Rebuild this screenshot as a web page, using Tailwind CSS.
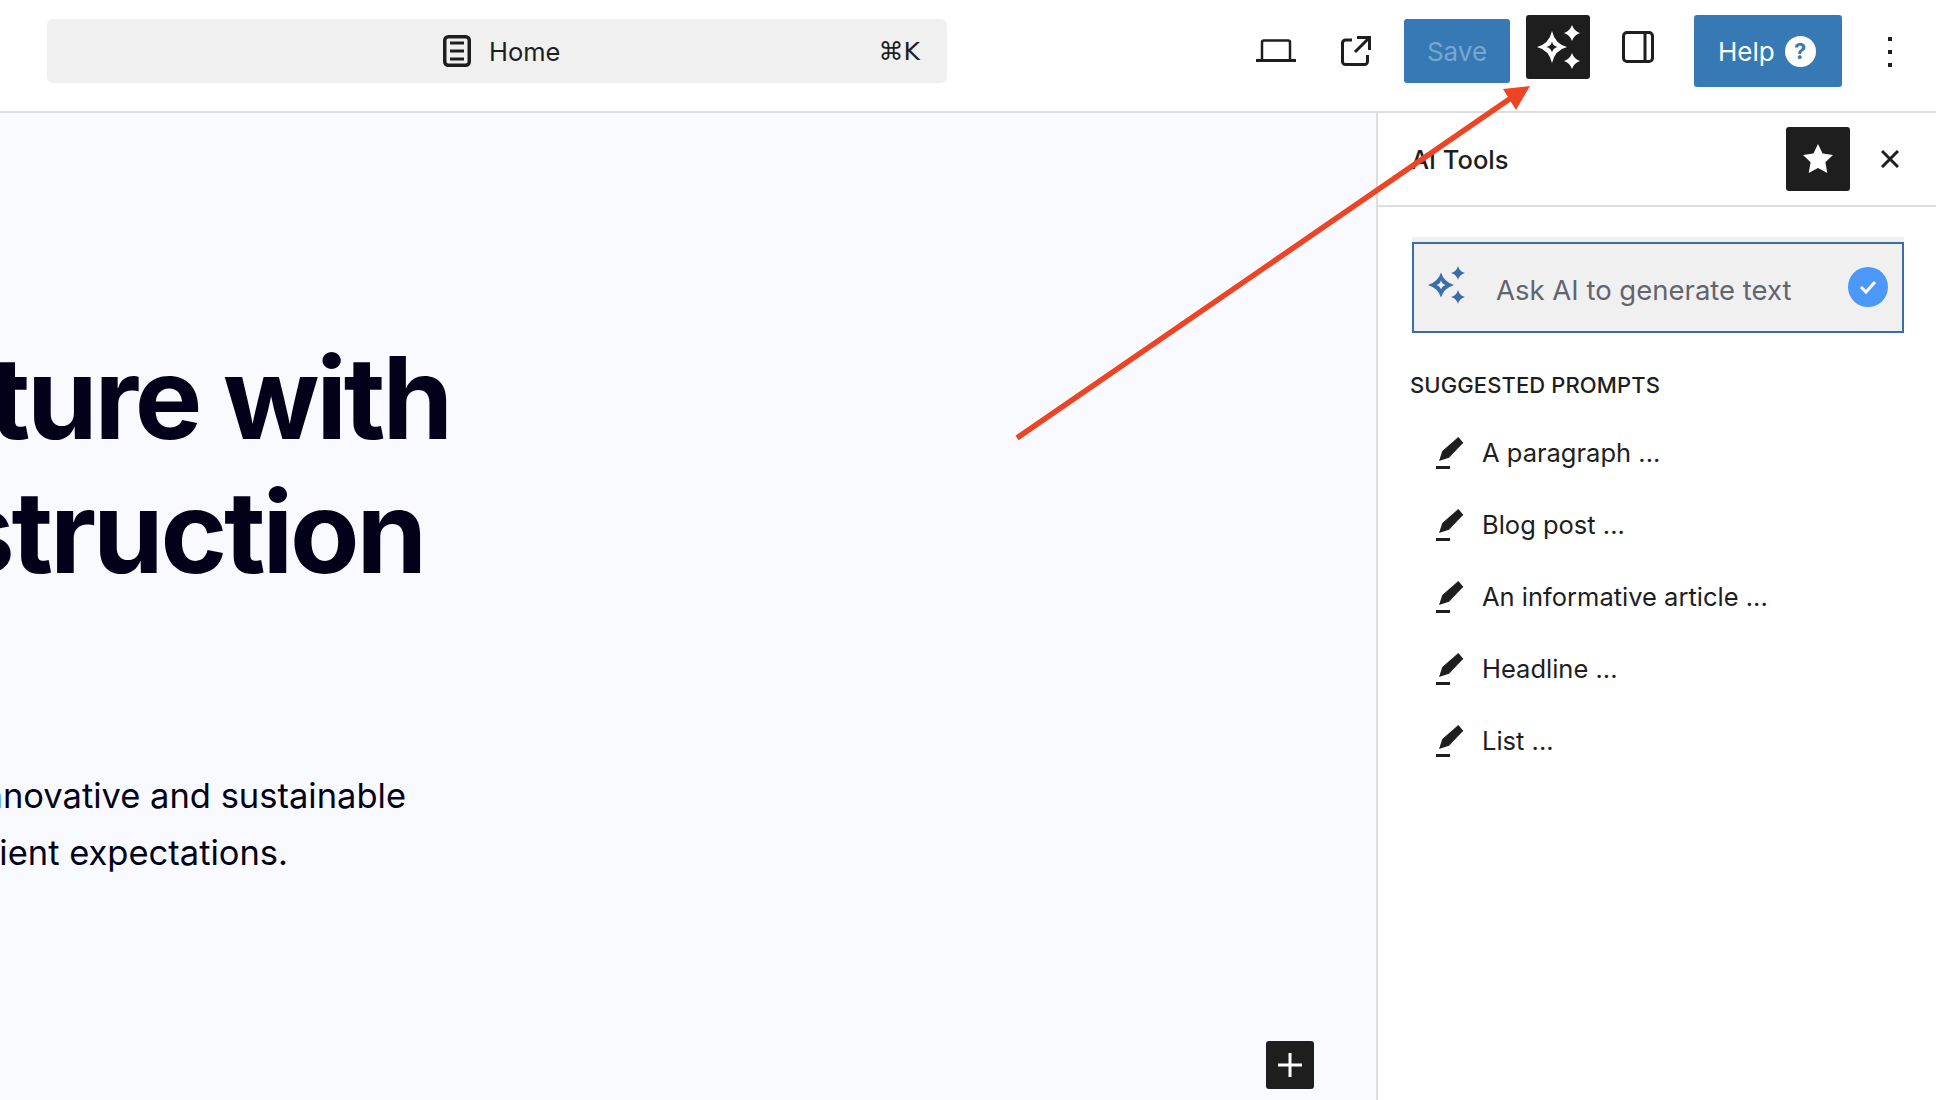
<!DOCTYPE html>
<html lang="en">
<head>
    <meta charset="UTF-8">
    <title>AI Tools</title>
    <script src="https://cdn.jsdelivr.net/npm/@tailwindcss/browser@4"></script>
</head>
<body class="relative w-[1936px] h-[1100px] overflow-hidden bg-white font-['Inter',sans-serif] text-[#1e1e1e]">

    <!-- top bar -->
    <header class="flex items-start h-[113px] border-b-2 border-[#dcdde1]">
        <div class="mt-[19px] ml-[47px] w-[900px] h-[64px] rounded-md bg-[#f0f0f0] flex items-center relative">
            <div class="flex items-center ml-[396px]">
                <svg class="w-[28px] h-[32px]" viewBox="0 0 28 32" fill="none" stroke="#1e1e1e" stroke-width="3.500"><rect x="1.750" y="1.750" width="24.500" height="28.500" rx="3.500"/><path d="M7 8h14M7 16h14M7 24h14" stroke-width="3"/></svg>
                <span class="ml-[18px] mt-[2px] text-[25.500px] leading-none">Home</span>
            </div>
            <span class="ml-auto mr-[27px] text-[25px] leading-none font-['DejaVu_Sans','Inter',sans-serif]">⌘K</span>
        </div>

        <svg class="mt-[39px] ml-[309px] w-[40px] h-[24px]" viewBox="0 0 40 24" fill="none" stroke="#1e1e1e" stroke-width="3"><path d="M6 20V3.500a2 2 0 0 1 2-2h24a2 2 0 0 1 2 2V20" stroke-width="2.500"/><path d="M0 21.500h40"/></svg>
        <svg class="mt-[36px] ml-[45px] w-[30px] h-[30px]" viewBox="0 0 30 30" fill="none" stroke="#1e1e1e" stroke-width="3"><path d="M11 4H4.500a3 3 0 0 0-3 3v18.500a3 3 0 0 0 3 3h19a3 3 0 0 0 3-3V19"/><path d="M14 16 28 2M16 1.500h12.500V14"/></svg>

        <div class="mt-[19px] ml-[33px] w-[106px] h-[64px] rounded-[3px] bg-[#3679b5] flex items-center justify-center text-[26px] text-[#74a8d2]">Save</div>

        <div class="mt-[15px] ml-[16px] w-[64px] h-[64px] rounded-[3px] bg-[#1e1e1e]">
            <svg class="w-[64px] h-[64px]" viewBox="0 0 64 64" fill="#fff" fill-rule="evenodd"><path d="M26 16Q29 29 41 32 29 35 26 48 23 35 11 32 23 29 26 16ZM26 26.500Q27 31 31.500 32 27 33 26 37.500 25 33 20.500 32 25 31 26 26.500Z"/><path d="M46 10Q48 16 54 18 48 20 46 26 44 20 38 18 44 16 46 10Z"/><path d="M46 38Q48 44 54 46 48 48 46 54 44 48 38 46 44 44 46 38Z"/></svg>
        </div>

        <svg class="mt-[31px] ml-[32px] w-[32px] h-[32px]" viewBox="0 0 32 32" fill="none" stroke="#1e1e1e" stroke-width="3"><rect x="1.500" y="1.500" width="29" height="29" rx="3.500"/><path d="M23 2v28"/></svg>

        <div class="mt-[15px] ml-[40px] w-[148px] h-[72px] rounded-[3px] bg-[#3679b5] flex items-center pl-[24px] text-[26px] text-white">
            Help
            <span class="ml-[10px] w-[31px] h-[31px] rounded-full bg-white flex items-center justify-center text-[22px] font-bold text-[#3679b5]">?</span>
        </div>

        <div class="mt-[37px] ml-[46px] flex flex-col gap-[9px]">
            <span class="block w-[4px] h-[4px] bg-[#1e1e1e]"></span>
            <span class="block w-[4px] h-[4px] bg-[#1e1e1e]"></span>
            <span class="block w-[4px] h-[4px] bg-[#1e1e1e]"></span>
        </div>
    </header>

    <div class="flex h-[987px]">
        <!-- canvas -->
        <main class="w-[1376px] bg-[#f9faff] flex flex-col overflow-hidden">
            <h1 class="mt-[218px] w-[450px] flex flex-col items-end text-[113.500px] leading-[134px] font-bold tracking-[-0.028em] text-[#01011a] whitespace-nowrap">
                <span>future with</span>
                <span class="mr-[26px]">construction</span>
            </h1>
            <p class="mt-[168px] w-[406px] flex flex-col items-end text-[34.500px] leading-[57px] text-[#01011a] whitespace-nowrap">
                <span>innovative and sustainable</span>
                <span class="mr-[118px]">client expectations.</span>
            </p>
            <div class="mt-auto mb-[11px] mr-[62px] self-end w-[48px] h-[48px] rounded-[3px] bg-[#1e1e1e] flex items-center justify-center">
                <svg class="w-[24px] h-[24px]" viewBox="0 0 24 24" fill="#fff"><path d="M10.500 0h3v10.500H24v3H13.500V24h-3V13.500H0v-3h10.500z"/></svg>
            </div>
        </main>

        <!-- settings sidebar -->
        <aside class="w-[560px] border-l-2 border-[#dcdde1] bg-white">
            <div class="h-[94px] border-b-2 border-[#dcdde1] flex items-center pl-[33px]">
                <span class="mt-[2px] text-[25.500px] font-medium">AI Tools</span>
                <div class="ml-auto w-[64px] h-[64px] rounded-[3px] bg-[#1e1e1e] flex items-center justify-center">
                    <svg class="w-[30px] h-[30px]" viewBox="0 0 30 30" fill="#fff"><path d="M15 0l4.600 9.600 10.400 1.400-7.600 7.300 1.900 10.700L15 24l-9.300 5 1.900-10.700L0 11l10.400-1.400z"/></svg>
                </div>
                <svg class="ml-[31px] mr-[37px] w-[18px] h-[18px]" viewBox="0 0 18 18" fill="none" stroke="#1e1e1e" stroke-width="3"><path d="M1 1l16 16M17 1 1 17"/></svg>
            </div>

            <div class="mt-[30px] ml-[34px] w-[492px] pt-[5px] bg-[#f0f0f0]">
                <div class="h-[91px] border-2 border-[#3a6ea8] flex items-center relative">
                    <svg class="ml-[14px] w-[40px] h-[42px] -mt-[6px]" viewBox="0 0 40 42" fill="#3a6ea8" fill-rule="evenodd"><path d="M13 8.500Q16 18 26 21 16 24 13 33.500 10 24 0 21 10 18 13 8.500ZM13 16.500Q14 20 17.500 21 14 22 13 25.500 12 22 8.500 21 12 20 13 16.500Z"/><path d="M30 2Q31.500 7.500 37 9 31.500 10.500 30 16 28.500 10.500 23 9 28.500 7.500 30 2Z"/><path d="M30 26Q31.500 31.500 37 33 31.500 34.500 30 40 28.500 34.500 23 33 28.500 31.500 30 26Z"/></svg>
                    <span class="ml-[28px] mt-[6px] text-[27.500px] text-[#62646e]">Ask AI to generate text</span>
                    <span class="absolute right-[14px] top-[23px] w-[40px] h-[40px] rounded-full bg-[#4b98f8] flex items-center justify-center">
                        <svg class="w-[20px] h-[16px]" viewBox="0 0 20 16" fill="none" stroke="#fff" stroke-width="3"><path d="M3 8l5 5 9-10"/></svg>
                    </span>
                </div>
            </div>

            <h2 class="mt-[39px] ml-[32px] text-[22px] leading-[26px] tracking-[0.1px] font-medium">SUGGESTED PROMPTS</h2>

            <ul class="mt-[19px] ml-[58px] flex flex-col">
                <li class="h-[72px] flex items-center gap-[16px] text-[25.500px]">
                    <svg class="w-[30px] h-[32px] shrink-0" viewBox="0 0 30 32" fill="#1e1e1e"><path d="M22.300 0l5 5.700L13 20.700 3 24l3.300-10z"/><rect y="29" width="14" height="3"/></svg>
                    A paragraph ...
                </li>
                <li class="h-[72px] flex items-center gap-[16px] text-[25.500px]">
                    <svg class="w-[30px] h-[32px] shrink-0" viewBox="0 0 30 32" fill="#1e1e1e"><path d="M22.300 0l5 5.700L13 20.700 3 24l3.300-10z"/><rect y="29" width="14" height="3"/></svg>
                    Blog post ...
                </li>
                <li class="h-[72px] flex items-center gap-[16px] text-[25.500px]">
                    <svg class="w-[30px] h-[32px] shrink-0" viewBox="0 0 30 32" fill="#1e1e1e"><path d="M22.300 0l5 5.700L13 20.700 3 24l3.300-10z"/><rect y="29" width="14" height="3"/></svg>
                    An informative article ...
                </li>
                <li class="h-[72px] flex items-center gap-[16px] text-[25.500px]">
                    <svg class="w-[30px] h-[32px] shrink-0" viewBox="0 0 30 32" fill="#1e1e1e"><path d="M22.300 0l5 5.700L13 20.700 3 24l3.300-10z"/><rect y="29" width="14" height="3"/></svg>
                    Headline ...
                </li>
                <li class="h-[72px] flex items-center gap-[16px] text-[25.500px]">
                    <svg class="w-[30px] h-[32px] shrink-0" viewBox="0 0 30 32" fill="#1e1e1e"><path d="M22.300 0l5 5.700L13 20.700 3 24l3.300-10z"/><rect y="29" width="14" height="3"/></svg>
                    List ...
                </li>
            </ul>
        </aside>
    </div>

    <!-- annotation arrow drawn over the screenshot -->
    <svg class="absolute left-0 top-0 w-[1936px] h-[1100px] pointer-events-none" viewBox="0 0 1936 1100">
        <path d="M1017 438 1511 98" stroke="#ee4423" stroke-width="5.500" fill="none"/>
        <path d="M1530 86 1503 89 1516 110z" fill="#ee4423"/>
    </svg>
</body>
</html>
